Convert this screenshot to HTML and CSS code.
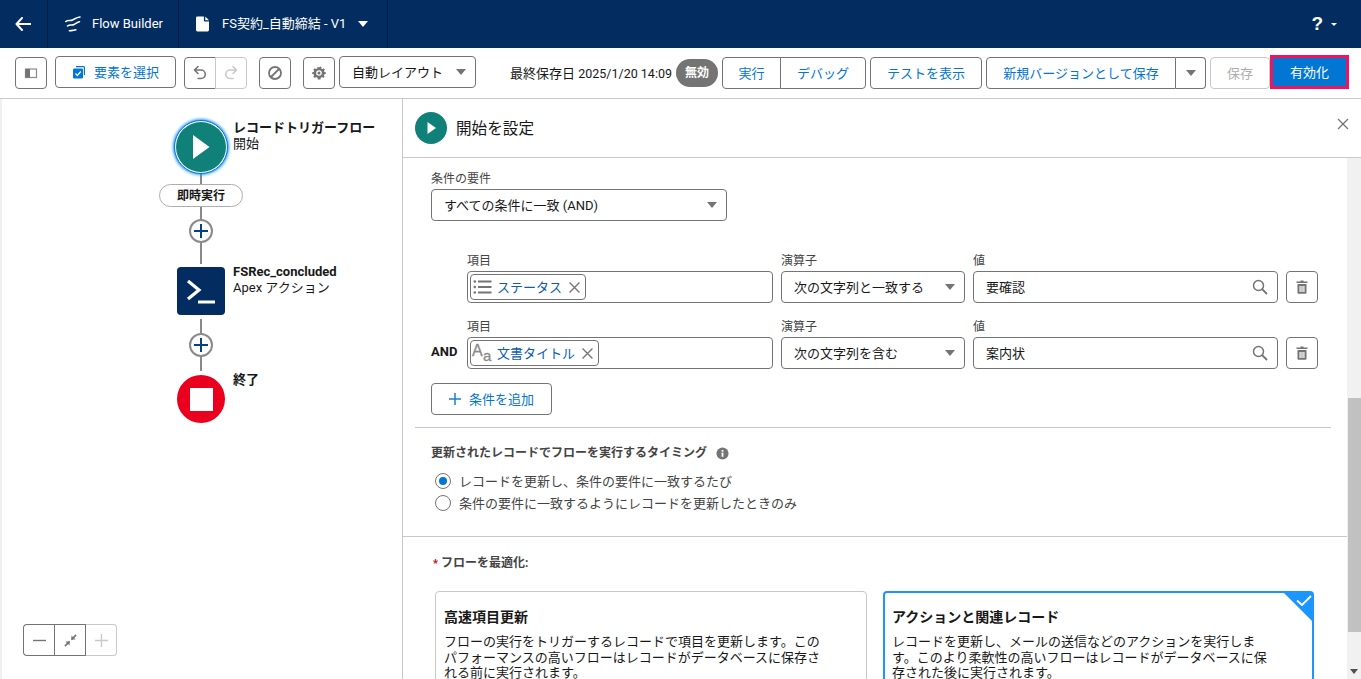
FILE: index.html
```html
<!DOCTYPE html>
<html lang="ja">
<head>
<meta charset="utf-8">
<title>Flow Builder</title>
<link rel="stylesheet" href="styles.css">
</head>
<body>
<header class="appbar">
  <div class="appcell cell-back">
    <svg class="ico-back" viewBox="0 0 16 14"><path d="M7 1 1.500 7 7 13M2 7h14" fill="none" stroke="#fff" stroke-width="2" stroke-linecap="round" stroke-linejoin="round"/></svg>
  </div>
  <div class="appcell cell-brand">
    <svg class="ico-flow" viewBox="0 0 16 16"><path d="M.8 5.500C3 3.500 5 5.300 7.500 4 9.500 3 12 1.200 15 1M2.500 10C5 8 6.500 9.800 9 8.500 11 7.500 12.500 6 14.500 5.800M4.500 14.800C6.500 14.500 8 14.800 10.800 13.800" fill="none" stroke="#fff" stroke-width="1.600" stroke-linecap="round"/></svg>
    <span>Flow Builder</span>
  </div>
  <div class="appcell cell-doc">
    <svg class="ico-doc" viewBox="0 0 14 16"><path d="M1.500 0H8.500V4.500A.8.800 0 0 0 9.300 5.300H14V14.500A1.500 1.500 0 0 1 12.500 16H1.500A1.500 1.500 0 0 1 0 14.500V1.500A1.500 1.500 0 0 1 1.500 0ZM10 0 14 4H10Z" fill="#fff"/></svg>
    <span>FS契約_自動締結 - V1</span>
    <i class="caret caret-white"></i>
  </div>
  <div class="appspacer"></div>
  <div class="help"><span>?</span><i class="caret caret-help"></i></div>
</header>

<nav class="toolbar">
  <button class="btn btn-icon">
    <svg class="ico16" viewBox="0 0 16 16"><rect x="2.500" y="4" width="11" height="8.500" fill="none" stroke="#8a8a8a" stroke-width="1.200"/><rect x="2.500" y="4" width="4.500" height="8.500" fill="#747474"/></svg>
  </button>
  <button class="btn btn-select up">
    <svg class="ico14" viewBox="0 0 14 14"><path d="M4 1h7.500A1.500 1.500 0 0 1 13 2.500V10h-1.200V2.200H4Z" fill="#0176d3"/><rect x="1" y="3.500" width="10" height="10" rx="1.200" fill="#0176d3"/><path d="M3.500 8.500 5.300 10.500 8.800 6.500" fill="none" stroke="#fff" stroke-width="1.200"/></svg>
    <span>要素を選択</span>
  </button>
  <div class="group group-undo">
    <button class="btn btn-icon btn-in">
      <svg class="ico16" viewBox="0 0 16 16"><path d="M6 1.500 2.500 5 6 8.500M3 5h6a4.200 4.200 0 0 1 0 8.500H6" fill="none" stroke="#747474" stroke-width="1.600" stroke-linecap="round" stroke-linejoin="round"/></svg>
    </button>
    <button class="btn btn-icon btn-in btn-off">
      <svg class="ico16" viewBox="0 0 16 16"><path d="M10 1.500 13.500 5 10 8.500M13 5H7a4.200 4.200 0 0 0 0 8.500h3" fill="none" stroke="#c9c9c9" stroke-width="1.600" stroke-linecap="round" stroke-linejoin="round"/></svg>
    </button>
  </div>
  <button class="btn btn-icon btn-stop">
    <svg class="ico16" viewBox="0 0 16 16"><circle cx="8" cy="8" r="6" fill="none" stroke="#747474" stroke-width="1.800"/><path d="M4 12 12 4" stroke="#747474" stroke-width="1.800"/></svg>
  </button>
  <button class="btn btn-icon btn-gear">
    <svg class="ico14" viewBox="0 0 14 14"><path d="M7 1.500 8.200 .4 9.500 1.300 9.400 2.900 10.900 3.100 11.600 1.900 12.900 3.800 11.800 4.900 12.500 6 13.800 6.200V8.100L12.500 8.300 11.800 9.300 12.700 10.500 11.300 12 10 11.100 8.800 11.800 8.400 13.400H5.900L5.400 11.800 4.100 11.100 2.800 12 1.300 10.500 2.200 9.300 1.600 8.300.2 8.100V6.200L1.600 6 2.200 4.900 1.200 3.700 2.700 2.200 4 3 5.200 2.400 5.600.7Z" fill="#747474"/><circle cx="7" cy="7" r="2.800" fill="#fff"/><circle cx="7" cy="7" r="1.500" fill="#747474"/></svg>
  </button>
  <div class="combo combo-layout up"><span>自動レイアウト</span><i class="caret"></i></div>
  <span class="saved">最終保存日 <span class="saved-date">2025/1/20 14:09</span></span>
  <span class="badge">無効</span>
  <div class="group group-run">
    <button class="btn btn-text btn-in run">実行</button>
    <button class="btn btn-text btn-in debug">デバッグ</button>
  </div>
  <button class="btn btn-text btn-test">テストを表示</button>
  <div class="group group-new">
    <button class="btn btn-text btn-in newver">新規バージョンとして保存</button>
    <button class="btn btn-icon btn-in newdrop"><i class="caret"></i></button>
  </div>
  <button class="btn btn-text btn-save">保存</button>
  <button class="btn btn-activate">有効化</button>
</nav>

<main class="workspace">
  <section class="canvas">
    <i class="wire w1"></i><i class="wire w2"></i><i class="wire w3"></i><i class="wire w4"></i><i class="wire w5"></i>
    <div class="node-start">
      <svg viewBox="0 0 50 50"><circle cx="25" cy="25" r="25" fill="#0f8179"/><path d="M17 13 33.500 25 17 37Z" fill="#fff"/></svg>
    </div>
    <div class="node-text t-start"><b>レコードトリガーフロー</b><span>開始</span></div>
    <div class="pill">即時実行</div>
    <div class="plus p1"><svg viewBox="0 0 14 14"><path d="M7 0V14M0 7H14" stroke="#014486" stroke-width="2"/></svg></div>
    <div class="node-apex">
      <svg viewBox="0 0 48 48"><path d="M11 14 22 23 11 32" fill="none" stroke="#fff" stroke-width="3.200"/><path d="M21 35H38" stroke="#fff" stroke-width="3"/></svg>
    </div>
    <div class="node-text t-apex"><b>FSRec_concluded</b><span>Apex アクション</span></div>
    <div class="plus p2"><svg viewBox="0 0 14 14"><path d="M7 0V14M0 7H14" stroke="#014486" stroke-width="2"/></svg></div>
    <div class="node-end"><i></i></div>
    <div class="node-text t-end"><b>終了</b></div>
    <div class="zoomctl">
      <button class="zbtn"><svg viewBox="0 0 14 14"><path d="M0 7H14" stroke="#747474" stroke-width="1.500"/></svg></button>
      <button class="zbtn zmid"><svg viewBox="0 0 14 14"><path d="M8 6 13 1M1 13 6 8" fill="none" stroke="#747474" stroke-width="1.700"/><path d="M8 1.500V6H12.500ZM1.500 8H6V12.500Z" fill="#747474"/></svg></button>
      <button class="zbtn zoff"><svg viewBox="0 0 14 14"><path d="M7 0V14M0 7H14" stroke="#c9c9c9" stroke-width="1.500"/></svg></button>
    </div>
  </section>

  <section class="panel">
    <div class="panel-head">
      <svg class="head-ico" viewBox="0 0 32 32"><circle cx="16" cy="16" r="16" fill="#0f8179"/><path d="M12.500 10 21 16 12.500 22Z" fill="#fff"/></svg>
      <h1>開始を設定</h1>
      <svg class="ico-close" viewBox="0 0 12 12"><path d="M1 1 11 11M11 1 1 11" stroke="#747474" stroke-width="1.300"/></svg>
    </div>
    <div class="panel-main">
      <div class="scroller">
        <div class="req">
          <label class="lbl">条件の要件</label>
          <div class="combo combo-req"><span>すべての条件に一致 (AND)</span><i class="caret"></i></div>
        </div>

        <div class="cond">
          <div class="logic"></div>
          <div class="f f-item"><label class="lbl">項目</label>
            <div class="field"><div class="chip">
              <svg class="chip-ico" viewBox="0 0 20 16"><path d="M5 2.500H18.500M5 8H18.500M5 13.500H18.500" stroke="#747474" stroke-width="2.200"/><circle cx="1.800" cy="2.500" r="1.300" fill="#747474"/><circle cx="1.800" cy="8" r="1.300" fill="#747474"/><circle cx="1.800" cy="13.500" r="1.300" fill="#747474"/></svg>
              <span>ステータス</span>
              <svg class="chip-x" viewBox="0 0 10 10"><path d="M.5.5 9.500 9.500M9.500.5.500 9.500" stroke="#747474" stroke-width="1.200"/></svg>
            </div></div>
          </div>
          <div class="f f-op"><label class="lbl">演算子</label>
            <div class="combo"><span>次の文字列と一致する</span><i class="caret"></i></div>
          </div>
          <div class="f f-val"><label class="lbl">値</label>
            <div class="combo val"><span>要確認</span>
              <svg class="ico-search" viewBox="0 0 16 16"><circle cx="6.500" cy="6.500" r="5" fill="none" stroke="#747474" stroke-width="1.500"/><path d="M10 10 15 15" stroke="#747474" stroke-width="1.800"/></svg>
            </div>
          </div>
          <button class="btn btn-icon btn-del"><svg class="ico-trash" viewBox="0 0 12 14"><path d="M4.500 1.500V.5H7.500V1.500H11.500V3H.5V1.500ZM1.500 4H10.500V12.800A1 1 0 0 1 9.500 13.800H2.500A1 1 0 0 1 1.500 12.800ZM3.500 6V12H4.700V6ZM5.400 6V12H6.600V6ZM7.300 6V12H8.500V6Z" fill="#747474" fill-rule="evenodd"/></svg></button>
        </div>

        <div class="cond cond2">
          <div class="logic">AND</div>
          <div class="f f-item"><label class="lbl">項目</label>
            <div class="field"><div class="chip">
              <svg class="chip-ico" viewBox="0 0 20 16"><text class="aa-big" x="-1" y="11">A</text><text class="aa-small" x="10" y="16">a</text></svg>
              <span>文書タイトル</span>
              <svg class="chip-x" viewBox="0 0 10 10"><path d="M.5.5 9.500 9.500M9.500.5.500 9.500" stroke="#747474" stroke-width="1.200"/></svg>
            </div></div>
          </div>
          <div class="f f-op"><label class="lbl">演算子</label>
            <div class="combo"><span>次の文字列を含む</span><i class="caret"></i></div>
          </div>
          <div class="f f-val"><label class="lbl">値</label>
            <div class="combo val"><span>案内状</span>
              <svg class="ico-search" viewBox="0 0 16 16"><circle cx="6.500" cy="6.500" r="5" fill="none" stroke="#747474" stroke-width="1.500"/><path d="M10 10 15 15" stroke="#747474" stroke-width="1.800"/></svg>
            </div>
          </div>
          <button class="btn btn-icon btn-del"><svg class="ico-trash" viewBox="0 0 12 14"><path d="M4.500 1.500V.5H7.500V1.500H11.500V3H.5V1.500ZM1.500 4H10.500V12.800A1 1 0 0 1 9.500 13.800H2.500A1 1 0 0 1 1.500 12.800ZM3.500 6V12H4.700V6ZM5.400 6V12H6.600V6ZM7.300 6V12H8.500V6Z" fill="#747474" fill-rule="evenodd"/></svg></button>
        </div>

        <button class="btn btn-add">
          <svg class="ico-add" viewBox="0 0 12 12"><path d="M6 0V12M0 6H12" stroke="#1b7fd6" stroke-width="1.500"/></svg>
          <span>条件を追加</span>
        </button>

        <hr class="rule rule-inner">

        <div class="timing">
          <div class="timing-title"><b>更新されたレコードでフローを実行するタイミング</b>
            <svg class="ico-info" viewBox="0 0 14 14"><circle cx="7" cy="7" r="6.500" fill="#747474"/><rect x="6" y="6" width="2" height="4.500" fill="#fff"/><rect x="6" y="3.300" width="2" height="1.700" fill="#fff"/></svg>
          </div>
          <div class="radio"><i class="dot on"></i><span>レコードを更新し、条件の要件に一致するたび</span></div>
          <div class="radio"><i class="dot"></i><span>条件の要件に一致するようにレコードを更新したときのみ</span></div>
        </div>

        <hr class="rule">

        <div class="optimize">
          <div class="opt-title"><em>*</em><b>フローを最適化:</b></div>
          <div class="cards">
            <article class="card">
              <h2>高速項目更新</h2>
              <p>フローの実行をトリガーするレコードで項目を更新します。このパフォーマンスの高いフローはレコードがデータベースに保存される前に実行されます。</p>
            </article>
            <article class="card card-on">
              <svg class="card-check" viewBox="0 0 30 30"><path d="M0 0H30V30Z" fill="#1b96ff"/><path d="M14 8.500 19 13 28 4" fill="none" stroke="#fff" stroke-width="1.800"/></svg>
              <h2>アクションと関連レコード</h2>
              <p>レコードを更新し、メールの送信などのアクションを実行します。このより柔軟性の高いフローはレコードがデータベースに保存された後に実行されます。</p>
            </article>
          </div>
        </div>
      </div>
      <div class="scrollbar"><div class="thumb"></div><i class="sb-arrow"></i></div>
    </div>
  </section>
</main>
</body>
</html>
```

FILE: styles.css
```css
* { box-sizing: border-box; }
html, body { margin: 0; height: 100%; overflow: hidden; }
body {
  display: flex; flex-direction: column; background: #fff; color: #181818;
  font: 13px/16px Roboto, "Noto Sans CJK JP", sans-serif;
}
button { font: inherit; padding: 0; background: #fff; cursor: default; }
svg { display: block; flex: none; }

.caret { display: block; width: 0; height: 0; flex: none; border-left: 5px solid transparent; border-right: 5px solid transparent; border-top: 6px solid #747474; }
.caret-white { border-top-color: #fff; margin-left: 12px; }
.caret-help { border-top-color: #fff; border-left-width: 3px; border-right-width: 3px; border-top-width: 3.500px; margin-left: 8px; }

/* app bar */
.appbar { height: 48px; flex: none; display: flex; background: #032d60; color: #fff; }
.appcell { display: flex; align-items: center; border-right: 1px solid #011f45; font-size: 13px; }
.cell-back { width: 48px; padding-left: 15px; }
.ico-back { width: 16px; height: 14px; }
.cell-brand { width: 131px; padding-left: 17px; }
.ico-flow { width: 16px; height: 16px; margin-right: 11px; }
.cell-doc { width: 209px; padding-left: 17px; }
.ico-doc { width: 13px; height: 16px; margin-right: 13px; }
.appspacer { flex: 1; }
.help { display: flex; align-items: center; padding-right: 24px; font: bold 19px "Liberation Sans", sans-serif; }

/* toolbar */
.toolbar { height: 51px; flex: none; display: flex; align-items: flex-start; padding: 9px 0 0 15px; border-bottom: 1px solid #c9c9c9; }
.btn { display: flex; align-items: center; justify-content: center; height: 32px; border: 1px solid #747474; border-radius: 4px; color: #0176d3; white-space: nowrap; }
.btn-text, .btn-activate { padding-top: 2px; }
.btn > span, .combo > span, .chip > span, .radio > span { padding-top: 2px; }
.btn-icon { width: 32px; }
.up { margin-top: -1px; }
.ico16 { width: 16px; height: 16px; }
.ico14 { width: 14px; height: 14px; }
.btn-select { width: 121px; margin-left: 8px; gap: 8px; }
.group { display: flex; }
.btn-in { border-radius: 0; }
.btn-in:first-child { border-radius: 4px 0 0 4px; }
.btn-in:last-child { border-radius: 0 4px 4px 0; border-left: 0; }
.btn-off { border-color: #c9c9c9; width: 32px; }
.group-undo { margin-left: 8px; }
.group-undo .btn-off { border-left: 1px solid #c9c9c9; margin-left: -1px; }
.btn-stop { margin-left: 12px; }
.btn-gear { margin-left: 12px; }
.combo { display: flex; align-items: center; justify-content: space-between; height: 32px; padding: 0 9px 0 12px; border: 1px solid #747474; border-radius: 4px; background: #fff; color: #181818; white-space: nowrap; }
.combo-layout { width: 137px; margin-left: 4px; }
.saved { margin-left: 34px; width: 166px; padding-top: 1px; line-height: 32px; font-size: 13px; white-space: nowrap; }
.saved-date { font-size: 12.500px; }
.badge { margin-top: 2px; width: 42px; height: 28px; border-radius: 14px; background: #747474; color: #fff; font-size: 12px; font-weight: 700; line-height: 28px; text-align: center; }
.group-run { margin-left: 4px; }
.run { width: 59px; }
.btn-in.debug { border-left: 1px solid #747474; margin-left: -1px; width: 86px; }
.btn-test { width: 112px; margin-left: 4px; }
.group-new { margin-left: 4px; }
.newver { width: 190px; }
.newdrop { width: 30px; }
.btn-save { width: 60px; margin-left: 4px; border-color: #c9c9c9; color: #aeaeae; }
.btn-activate { width: 79px; height: 34px; margin: -2px 0 0 0; border: 3px solid #f0145f; border-radius: 0; background: #0176d3; color: #fff; }

/* workspace */
.workspace { flex: 1; min-height: 0; display: flex; }
.canvas { position: relative; width: 402px; flex: none; border-left: 2px solid #f0f0f0; }

.wire { position: absolute; left: 198px; width: 2px; background: #8a8a8a; }
.w1 { top: 74px; height: 13px; }
.w2 { top: 108px; height: 13px; }
.w3 { top: 143px; height: 22px; }
.w4 { top: 220px; height: 15px; }
.w5 { top: 257px; height: 15px; }

.node-start { position: absolute; left: 172px; top: 21px; width: 54px; height: 54px; padding: 1px; border-radius: 50%; background: #fff; border: 1px solid #0176d3; box-shadow: 0 0 3px 1px #1b96ff; }
.node-start svg { width: 50px; height: 50px; }
.node-text { position: absolute; left: 231px; white-space: nowrap; }
.node-text b, .node-text span { display: block; }
.node-text b { font-size: 13px; font-weight: 700; }
.t-start { top: 21px; }
.t-apex { top: 165px; }
.t-end { top: 273px; }
.pill { position: absolute; left: 157px; top: 85px; width: 84px; height: 23px; border: 1px solid #aeaeae; border-radius: 12px; background: #fff; font-size: 12px; font-weight: 700; line-height: 23px; text-align: center; }
.plus { position: absolute; left: 187px; width: 24px; height: 24px; display: flex; align-items: center; justify-content: center; border: 2px solid #8a8a8a; border-radius: 50%; background: #fff; }
.plus svg { width: 14px; height: 14px; }
.p1 { top: 120px; }
.p2 { top: 234px; }
.node-apex { position: absolute; left: 175px; top: 168px; width: 48px; height: 48px; border-radius: 4px; background: #032d60; }
.node-end { position: absolute; left: 175px; top: 276px; width: 48px; height: 48px; display: flex; align-items: center; justify-content: center; border-radius: 50%; background: #ea001e; }
.node-end i { width: 23px; height: 23px; background: #fff; }

.zoomctl { position: absolute; left: 21px; top: 525px; display: flex; }
.zbtn { display: flex; align-items: center; justify-content: center; width: 32px; height: 32px; border: 1px solid #747474; }
.zbtn svg { width: 13px; height: 13px; }
.zbtn:first-child { border-radius: 4px 0 0 4px; border-right: 0; width: 31px; }
.zmid { width: 32px; }
.zoff { border-color: #c9c9c9; border-radius: 0 4px 4px 0; border-left: 0; width: 31px; }

/* panel */
.panel { flex: 1; min-width: 0; display: flex; flex-direction: column; border-left: 1px solid #c9c9c9; }
.panel-head { height: 59px; flex: none; display: flex; align-items: center; padding: 0 12px 0 12px; border-bottom: 1px solid #c9c9c9; }
.head-ico { width: 32px; height: 32px; }
.panel-head h1 { flex: 1; margin: 0 0 0 9px; padding-top: 2px; font-size: 15.600px; font-weight: 400; }
.ico-close { width: 12px; height: 12px; margin-bottom: 8px; }
.panel-main { flex: 1; min-height: 0; display: flex; }
.scroller { flex: 1; min-width: 0; overflow: hidden; }
.scrollbar { position: relative; width: 14px; flex: none; background: #f1f1f1; padding: 240px 0 0 1px; }
.thumb { height: 234px; background: #c1c1c1; }
.sb-arrow { position: absolute; right: 3px; bottom: 5px; border-left: 4px solid transparent; border-right: 4px solid transparent; border-top: 5px solid #505050; }

.lbl { display: block; padding-top: 1px; margin-bottom: 3px; height: 15px; font-size: 12px; line-height: 14px; color: #444; }
.req { padding: 13px 0 0 28px; }
.combo-req { width: 296px; }

.cond { display: flex; gap: 8px; margin: 32px 0 0 28px; }
.cond2 { margin-top: 16px; }
.logic { width: 28px; align-self: flex-end; height: 32px; font-size: 13px; font-weight: 700; line-height: 30px; white-space: nowrap; }
.f-item { width: 306px; }
.f-op { width: 184px; }
.f-val { width: 305px; }
.field { height: 32px; padding: 2px; border: 1px solid #747474; border-radius: 4px; }
.chip { display: inline-flex; align-items: center; height: 26px; padding: 0 5px 0 2px; border: 1px solid #747474; border-radius: 4px; color: #0b5cab; }
.chip-ico { width: 20px; height: 16px; margin-right: 4px; overflow: visible; }
.aa-big, .aa-small { fill: #8a8a8a; stroke: #8a8a8a; stroke-width: .3px; font-family: "Liberation Sans", sans-serif; }
.aa-big { font-size: 16px; }
.aa-small { font-size: 15px; }
.chip-x { width: 11px; height: 11px; margin-left: 7px; }
.val { padding-right: 9px; }
.ico-search { width: 16px; height: 16px; }
.btn-del { align-self: flex-end; }
.ico-trash { width: 12px; height: 14px; }

.btn-add { width: 121px; margin: 14px 0 0 28px; gap: 8px; }
.ico-add { width: 12px; height: 12px; }

.rule { height: 1px; margin: 0; border: 0; background: #c9c9c9; }
.rule-inner { margin: 12px 16px 0 12px; }

.timing { padding: 18px 0 0 28px; height: 108px; }
.timing-title { display: flex; align-items: center; gap: 9px; height: 14px; font-size: 12px; line-height: 14px; color: #444; }
.timing-title b { font-weight: 700; }
.ico-info { width: 13px; height: 13px; }
.radio { display: flex; align-items: center; height: 22px; color: #444; }
.timing-title + .radio { margin-top: 10px; }
.dot { width: 16px; height: 16px; margin: 0 8px 0 4px; border: 1px solid #747474; border-radius: 50%; background: #fff; }
.dot.on { border: 1px solid #747474; padding: 3px; background: #0176d3 content-box; }

.optimize { padding: 19px 0 0 30px; }
.opt-title { height: 14px; font-size: 12px; line-height: 14px; color: #444; }
.opt-title em { display: inline-block; width: 8px; color: #ba0517; font-size: 11px; font-style: normal; font-weight: 700; }
.opt-title b { font-weight: 700; }
.cards { display: flex; gap: 16px; margin: 21px 0 0 2px; }
.card { position: relative; width: 432px; height: 220px; padding: 16px 8px 0 8px; border: 1px solid #c9c9c9; border-radius: 4px; }
.card-on { width: 431px; padding: 15px 7px 0 7px; border: 2px solid #1b96ff; }
.card h2 { margin: 0 0 8px; font-size: 14px; line-height: 18px; font-weight: 700; }
.card p { margin: 0; width: 380px; line-height: 15.600px; color: #181818; }
.card-check { position: absolute; right: -1px; top: -1px; width: 30px; height: 30px; }
```
